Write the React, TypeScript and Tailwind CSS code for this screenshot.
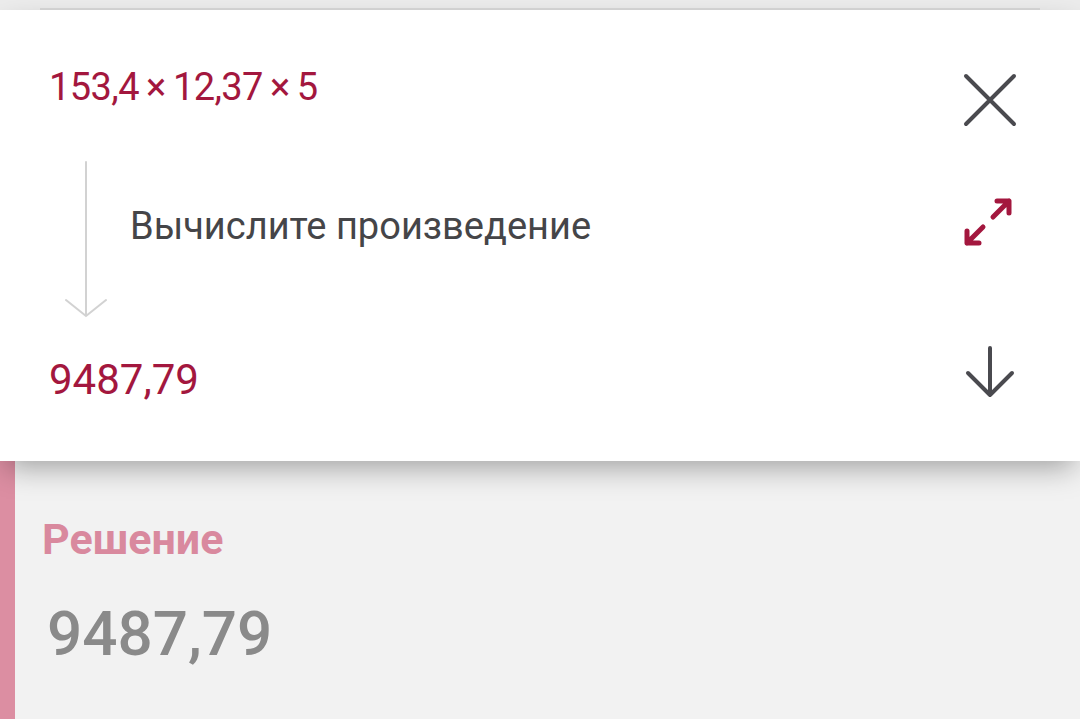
export default function App() {
  return (
    <div className="w-[1080px] h-[719px] overflow-hidden bg-[#f2f2f2] flex flex-col" style={{ fontFamily: "Roboto, 'Noto Sans', sans-serif" }}>
      {/* strip of the previous card */}
      <div className="h-[10px] bg-[#ececec] flex flex-col justify-end">
        <div className="h-[2px] mx-[40px] bg-[#d8d8d8]" />
      </div>

      {/* task card */}
      <div className="relative z-10 bg-white h-[451px] flex flex-col shadow-[0_12px_28px_-6px_rgba(0,0,0,0.35)]">
        {/* expression */}
        <div className="h-[140px] flex justify-between pl-[49px] pr-[63px]">
          <div className="mt-[58px] text-[38px] leading-none text-[#a3173e] tracking-[-0.6px]">
            153,4{"\u2009"}×{"\u2009"}12,37{"\u2009"}×{"\u2009"}5
          </div>
          <svg className="mt-[63px]" width="54" height="54" viewBox="0 0 54 54" fill="none" stroke="#4a4a4f" strokeWidth="4" strokeLinecap="round">
            <path d="M3 3L51 51M51 3L3 51" />
          </svg>
        </div>

        {/* step */}
        <div className="h-[180px] flex pl-[60px] pr-[66px]">
          <svg className="mt-[10px]" width="52" height="160" viewBox="0 0 52 160" fill="none" stroke="#d2d2d2" strokeWidth="2" strokeLinecap="round">
            <path d="M26 2V156M6 140L26 156L46 140" />
          </svg>
          <div className="ml-[18px] mt-[57px] text-[38px] leading-none text-[#454548]">
            Вычислите произведение
          </div>
          <div className="flex-1" />
          <svg className="mt-[46px]" width="52" height="52" viewBox="0 0 52 52" fill="none" stroke="#a3173e" strokeWidth="5" strokeLinecap="round" strokeLinejoin="round">
            <path d="M31 21L47 5M35 5H47V17" />
            <path d="M21 31L5 47M5 35V47H17" />
          </svg>
        </div>

        {/* result */}
        <div className="flex-1 flex justify-between pl-[49px] pr-[64px]">
          <div className="mt-[29px] text-[42px] leading-none text-[#a3173e]">
            9487,79
          </div>
          <svg className="mt-[15px]" width="52" height="54" viewBox="0 0 52 54" fill="none" stroke="#4a4a4f" strokeWidth="4" strokeLinecap="round" strokeLinejoin="round">
            <path d="M26 3V50M4 28L26 50L48 28" />
          </svg>
        </div>
      </div>

      {/* solution */}
      <div className="flex-1 flex">
        <div className="w-[15px] bg-[#dc8ea2]" />
        <div className="pl-[27px] flex flex-col">
          <div className="mt-[57px] text-[43px] leading-none font-bold text-[#d9899e]">
            Решение
          </div>
          <div className="mt-[42px] ml-[5px] text-[62px] leading-none font-medium text-[#8a8a8a]">
            9487,79
          </div>
        </div>
      </div>
    </div>
  );
}
